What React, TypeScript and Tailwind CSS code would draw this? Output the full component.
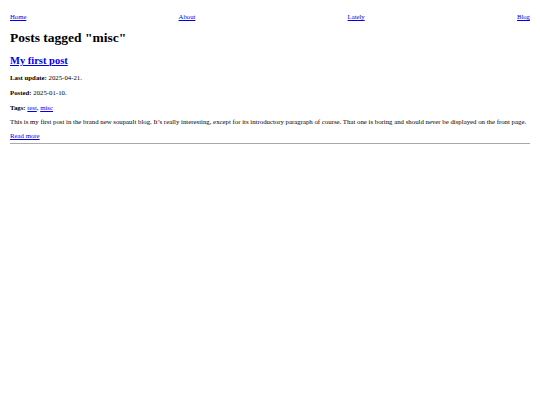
export default function App() {
  return (
    <div className="min-h-[405px] bg-white px-[10px] pt-[12px] text-black" style={{ fontFamily: '"Liberation Serif", "Times New Roman", serif' }}>
      <nav className="flex justify-between text-[6.7px] leading-[10px]">
        <a href="#" className="text-[#0000ee] underline">Home</a>
        <a href="#" className="text-[#0000ee] underline">About</a>
        <a href="#" className="text-[#0000ee] underline">Lately</a>
        <a href="#" className="text-[#0000ee] underline">Blog</a>
      </nav>
      <h1 className="mt-[8px] text-[13.5px] font-bold leading-[16px]">Posts tagged "misc"</h1>
      <h2 className="mt-[9px] text-[10.5px] font-bold leading-[12px]">
        <a href="#" className="text-[#0000ee] underline">My first post</a>
      </h2>
      <div className="text-[6.8px] leading-[10px]">
        <p className="mt-[6px]"><b>Last update:</b> 2025-04-21.</p>
        <p className="mt-[5px]"><b>Posted:</b> 2025-01-10.</p>
        <p className="mt-[5px]">
          <b>Tags:</b> <a href="#" className="text-[#0000ee] underline">test</a>,{" "}
          <a href="#" className="text-[#0000ee] underline">misc</a>
        </p>
        <p className="mt-[4px]">
          This is my first post in the brand new soupault blog. It’s really interesting, except for its introductory paragraph of course. That one is boring and should never be displayed on the front page.
        </p>
        <p className="mt-[4px]">
          <a href="#" className="text-[#0000ee] underline">Read more</a>
        </p>
      </div>
      <hr className="mt-[2px] border-t border-[#aaa]" />
    </div>
  );
}
